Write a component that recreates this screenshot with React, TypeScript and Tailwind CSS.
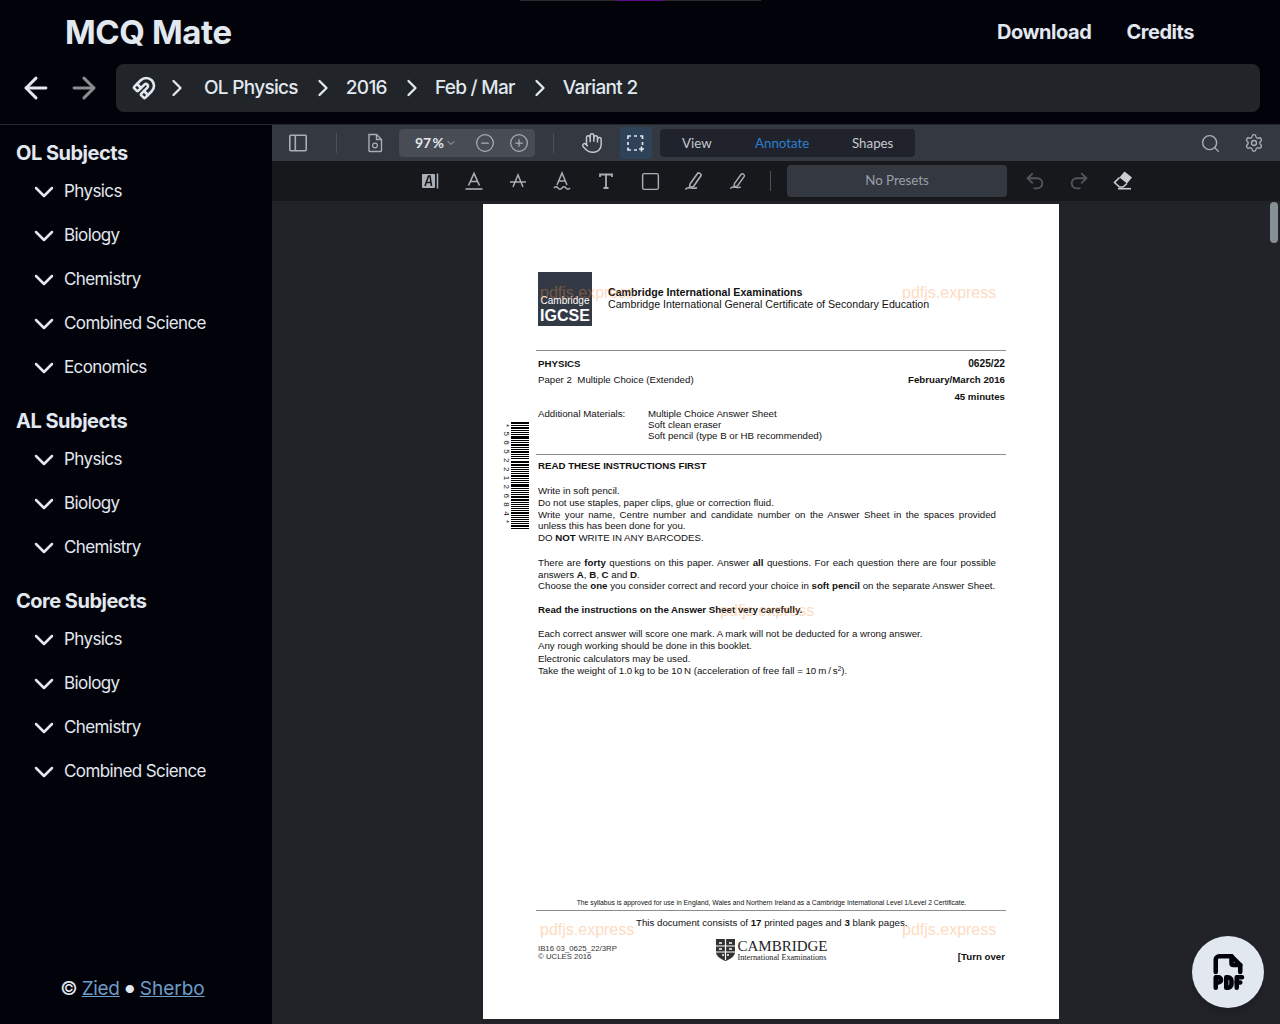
import {
  ArrowLeft,
  ArrowRight,
  ChevronDown,
  ChevronRight,
  CircleMinus,
  CirclePlus,
  Hand,
  Magnet,
  Redo2,
  Search,
  Settings,
  Square,
  Undo2,
} from "lucide-react";
import { TbFileTypePdf } from "react-icons/tb";

const groups = [
  { title: "OL Subjects", items: ["Physics", "Biology", "Chemistry", "Combined Science", "Economics"] },
  { title: "AL Subjects", items: ["Physics", "Biology", "Chemistry"] },
  { title: "Core Subjects", items: ["Physics", "Biology", "Chemistry", "Combined Science"] },
];

const crumbs = ["OL Physics", "2016", "Feb / Mar", "Variant 2"];

const barHeights = [2, 1, 2, 1, 1, 1, 3, 1, 1, 2, 1, 1, 2, 1, 1, 1, 2, 2, 1, 1, 1, 1, 2, 1, 1, 1, 3, 1, 1, 1, 1, 2, 2, 1, 1, 1, 1, 1, 2, 1, 1, 1, 1, 1, 2, 1];

export default function App() {
  return (
    <div className="relative flex h-screen w-full flex-col overflow-hidden bg-[#02030a] font-['Inter',sans-serif]">
      <div className="absolute left-[520px] top-0 h-px w-[241px] bg-[#2a2a2a]" />
      <div className="absolute left-[616px] top-0 h-px w-[48px] bg-[#5f0a87]" />
      <Header />
      <div className="flex min-h-0 flex-1">
        <Sidebar />
        <Viewer />
      </div>
      <button className="absolute left-[1192px] top-[936px] flex h-[72px] w-[72px] items-center justify-center rounded-full bg-[#e2e8f0] text-[#02030a] shadow-lg">
        <TbFileTypePdf size={42} strokeWidth={2.6} />
      </button>
    </div>
  );
}

const Header = () => {
  return (
    <header className="h-[125px] shrink-0 border-b border-[#23262d]">
      <div className="flex h-[64px] items-center justify-between pl-[65px] pr-[86px] text-[#e2e8f0]">
        <h1 className="pt-[2px] text-[33px] font-bold tracking-[-0.4px]">MCQ Mate</h1>
        <nav className="flex gap-[35px] text-[20px] font-bold tracking-[-0.45px]">
          <a>Download</a>
          <a>Credits</a>
        </nav>
      </div>
      <div className="flex items-center pl-[19px] pr-[20px]">
        <ArrowLeft size={34} strokeWidth={2.1} className="text-[#e2e8f0]" />
        <ArrowRight size={34} strokeWidth={2.1} className="ml-[14px] text-[#8a8d91]" />
        <div className="ml-[15px] flex h-[48px] flex-1 items-center rounded-lg bg-[#212429] pl-[16px] text-[19px] font-medium tracking-[-0.7px] text-[#e2e8f0]">
          <Magnet size={24} strokeWidth={2.6} />
          <ChevronRight size={28} strokeWidth={2} className="ml-[7px]" />
          <div className="ml-[4px] flex items-center">
            {crumbs.map((crumb, i) => (
              <div key={crumb} className="flex items-center">
                <span className="ml-[9px]">{crumb}</span>
                {i < crumbs.length - 1 && <ChevronRight size={28} strokeWidth={2} className="ml-[11px]" />}
              </div>
            ))}
          </div>
        </div>
      </div>
    </header>
  );
};

const Sidebar = () => {
  return (
    <aside className="flex w-[272px] shrink-0 flex-col pt-[12px] text-[#e2e8f0]">
      <div className="flex-1">
        {groups.map((group) => (
          <div key={group.title} className="mb-[16px]">
            <h2 className="flex h-[32px] items-center pl-[16px] text-[20px] font-bold tracking-[-0.5px]">
              {group.title}
            </h2>
            {group.items.map((item) => (
              <div key={item} className="flex h-[44px] items-center pl-[28px] pt-[2px] text-[17px] tracking-[-0.6px]">
                <ChevronDown size={32} strokeWidth={1.9} />
                <span className="ml-[4px]">{item}</span>
              </div>
            ))}
          </div>
        ))}
      </div>
      <footer className="flex h-[72px] items-center justify-center pr-[7px] pt-[2px] text-[19px]">
        <span>©</span>
        <a className="ml-[4px] tracking-[-0.3px] text-[#6d9cc6] underline">Zied</a>
        <span className="ml-[5px] text-[11px]">●</span>
        <a className="ml-[5px] text-[#6d9cc6] underline">Sherbo</a>
      </footer>
    </aside>
  );
};

const Viewer = () => {
  return (
    <main className="relative flex min-w-0 flex-1 flex-col bg-[#212329] font-['Lato',sans-serif]">
      <TopToolbar />
      <AnnotateToolbar />
      <div className="flex-1 overflow-hidden pl-[211px] pt-[3px]">
        <PdfPage />
      </div>
      <div className="absolute left-[998px] top-[77px] h-[41px] w-[8px] rounded-full bg-[#868e96]" />
    </main>
  );
};

const TopToolbar = () => {
  return (
    <div className="flex h-[36px] shrink-0 items-center bg-[#343841] text-[#a9afb7]">
      <div className="ml-[10px] flex w-[32px] justify-center">
        <svg width="20" height="20" viewBox="0 0 20 20" fill="none" stroke="currentColor" strokeWidth="1.6">
          <rect x="1.8" y="2.3" width="16.4" height="15.400" rx="1" />
          <path d="M7.300 2.300v15.400" />
        </svg>
      </div>
      <div className="ml-[22px] h-[20px] w-px bg-[#4b505a]" />
      <div className="ml-[21px] flex w-[32px] justify-center pl-[1px]">
        <svg width="20" height="20" viewBox="0 0 20 20" fill="none" stroke="currentColor" strokeWidth="1.4">
          <path d="M4 1.500h7.500L16.500 6.500v11a1 1 0 0 1-1 1h-10.500a1 1 0 0 1-1-1z" />
          <path d="M11.500 1.500v5h5" />
          <circle cx="10" cy="12.500" r="2.400" strokeWidth="1.200" />
        </svg>
      </div>
      <div className="ml-[9px] flex h-[28px] w-[136px] items-center rounded bg-[#474c55]">
        <span className="ml-[16px] w-[27px] whitespace-nowrap pb-[1px] text-[14px] font-bold tracking-[-0.2px] text-[#e2e6ea]">
          97&thinsp;%
        </span>
        <ChevronDown size={12} className="ml-[3px]" />
        <CircleMinus size={20} strokeWidth={1.5} className="ml-[18px]" />
        <CirclePlus size={20} strokeWidth={1.5} className="ml-[14px]" />
      </div>
      <div className="ml-[18px] h-[20px] w-px bg-[#4b505a]" />
      <div className="ml-[22px] flex w-[32px] justify-center text-[#c5cad0]">
        <Hand size={22} strokeWidth={1.6} />
      </div>
      <div className="ml-[12px] flex h-[32px] w-[32px] items-center justify-center rounded bg-[#2e4358] text-[#dfe6ee]">
        <svg width="20" height="20" viewBox="0 0 20 20" fill="none" stroke="currentColor" strokeWidth="1.7">
          <path d="M2 6V3h3M8 3h3M14 3h2.500v3M2 9v3M2 14.500V17h3M8 17h3M16.500 9v3M15.500 13.500v5M13 16h5" />
        </svg>
      </div>
      <div className="ml-[8px] flex h-[28px] w-[255px] items-center rounded bg-[#20232b] pt-[1px] text-[13.300px]">
        <span className="w-[95px] pl-[22px] text-[#c5cad0]">View</span>
        <span className="w-[97px] text-[#2b7fd0]">Annotate</span>
        <span className="text-[#c5cad0]">Shapes</span>
      </div>
      <Search size={21} strokeWidth={1.6} className="ml-[285px]" />
      <Settings size={20} strokeWidth={1.6} className="ml-[23px]" />
    </div>
  );
};

const AnnotateToolbar = () => {
  return (
    <div className="flex h-[40px] shrink-0 items-center bg-[#17181c] pl-[136px] text-[#a9afb7]">
      <ToolCell>
        <svg width="20" height="20" viewBox="0 0 20 20" fill="none">
          <rect x="2" y="3" width="13" height="14" rx="1" fill="currentColor" />
          <path d="M5 15 8.500 5h1.500l1.500 10M6.500 11.500H11" stroke="#17181c" strokeWidth="1.600" />
          <path d="M17.500 2.500v15" stroke="currentColor" strokeWidth="1.500" />
        </svg>
      </ToolCell>
      <ToolCell>
        <svg width="20" height="20" viewBox="0 0 20 20" fill="none" stroke="currentColor" strokeWidth="1.600">
          <path d="M4.500 14.500 10 2.500l5.500 12M6.500 10.500h7" />
          <path d="M1.500 18h17" />
        </svg>
      </ToolCell>
      <ToolCell>
        <svg width="20" height="20" viewBox="0 0 20 20" fill="none" stroke="currentColor" strokeWidth="1.500">
          <path d="M5 16 10 4l5 12" />
          <path d="M2 11h16" />
        </svg>
      </ToolCell>
      <ToolCell>
        <svg width="20" height="20" viewBox="0 0 20 20" fill="none" stroke="currentColor" strokeWidth="1.500">
          <path d="M5 14 10 2l5 12M6.700 10h6.600" />
          <path d="M2 17c1.500-1.600 2.700-1.600 4 0s2.700 1.600 4 0 2.700-1.600 4 0 2.700 1.600 4 0" />
        </svg>
      </ToolCell>
      <ToolCell>
        <svg width="20" height="20" viewBox="0 0 20 20" fill="none" stroke="currentColor" strokeWidth="1.800">
          <path d="M4 6V3.500h12V6M10 3.500V17M7.500 17h5" />
        </svg>
      </ToolCell>
      <ToolCell>
        <Square size={21} strokeWidth={1.6} />
      </ToolCell>
      <ToolCell>
        <Pen size={20} />
      </ToolCell>
      <ToolCell>
        <Pen size={18} />
      </ToolCell>
      <div className="ml-[10px] h-[20px] w-px bg-[#4b505a]" />
      <div className="ml-[16px] flex h-[32px] w-[220px] items-center justify-center rounded bg-[#343841] text-[13.300px] text-[#9aa0a8]">
        No Presets
      </div>
      <div className="ml-[6px] flex">
        <ToolCell>
          <Undo2 size={22} strokeWidth={2} className="text-[#50555d]" />
        </ToolCell>
        <ToolCell>
          <Redo2 size={22} strokeWidth={2} className="text-[#50555d]" />
        </ToolCell>
        <ToolCell>
          <svg width="20" height="20" viewBox="0 0 20 20" fill="none" className="text-[#c9ced4]">
            <path d="M11.500 1.500 19 7.500l-5 6L6.500 7.500z" fill="currentColor" />
            <path d="M6.500 7.500 1.500 12.500 6.500 17H10l4-3.500" stroke="currentColor" strokeWidth="1.600" />
            <path d="M5 18.700h13" stroke="currentColor" strokeWidth="1.600" />
          </svg>
        </ToolCell>
      </div>
    </div>
  );
};

const ToolCell = ({ children }: { children: React.ReactNode }) => {
  return <div className="flex w-[44px] justify-center">{children}</div>;
};

const Pen = ({ size }: { size: number }) => {
  return (
    <svg width={size} height={size} viewBox="0 0 20 20" fill="none" stroke="currentColor" strokeWidth="1.6">
      <path d="M6 13 13.500 2.500a1.500 1.500 0 0 1 2-.4l1 .7a1.500 1.500 0 0 1 .4 2L9.500 15.500 5.500 16.500z" />
      <path d="M1.500 18.500c1.500-2.500 3.500-2 6-1.500 2 .4 4 .5 5.500-.5" />
    </svg>
  );
};

const PdfPage = () => {
  return (
    <div className="relative h-[815px] w-[576px] bg-white pl-[55px] pr-[54px] pt-[68px] font-['Liberation_Sans',sans-serif] text-[9.700px] leading-[11.500px] text-[#111]">
      <Watermark className="left-[57px] top-[80px]" />
      <Watermark className="left-[419px] top-[80px]" />
      <Watermark className="left-[237px] top-[398px]" />
      <Watermark className="left-[57px] top-[717px]" />
      <Watermark className="left-[419px] top-[717px]" />
      <Barcode />

      <div className="flex h-[54px]">
        <div className="flex h-[54px] w-[54px] flex-col items-center justify-end bg-[#333a45] text-white">
          <span className="text-[10px] font-normal leading-[10px]">Cambridge</span>
          <span className="text-[16px] font-bold leading-[20px]">IGCSE</span>
        </div>
        <div className="ml-[16px] mt-[15px] text-[10.650px] leading-[11.500px]">
          <div className="font-bold">Cambridge International Examinations</div>
          <div>Cambridge International General Certificate of Secondary Education</div>
        </div>
      </div>

      <div className="ml-[-2px] mt-[24px] h-px w-[470px] bg-[#8c8c8c]" />

      <div className="mt-[7px] flex justify-between font-bold">
        <span>PHYSICS</span>
        <span className="text-[10.200px]">0625/22</span>
      </div>
      <div className="mt-[4.500px] flex justify-between">
        <span>Paper 2&nbsp; Multiple Choice (Extended)</span>
        <span className="font-bold">February/March 2016</span>
      </div>
      <div className="mt-[5.500px] text-right font-bold">45 minutes</div>

      <div className="mt-[5.500px] flex">
        <span className="w-[110px]">Additional Materials:</span>
        <div className="leading-[11px]">
          <div>Multiple Choice Answer Sheet</div>
          <div>Soft clean eraser</div>
          <div>Soft pencil (type B or HB recommended)</div>
        </div>
      </div>

      <div className="ml-[-2px] mt-[13px] h-px w-[470px] bg-[#8c8c8c]" />

      <div className="mt-[5px] font-bold">READ THESE INSTRUCTIONS FIRST</div>

      <div className="mt-[13.500px] pr-[9px] leading-[11.750px]">
        <div>Write in soft pencil.</div>
        <div>Do not use staples, paper clips, glue or correction fluid.</div>
        <Justified>Write your name, Centre number and candidate number on the Answer Sheet in the spaces provided</Justified>
        <div>unless this has been done for you.</div>
        <div>
          DO <b>NOT</b> WRITE IN ANY BARCODES.
        </div>
      </div>

      <div className="mt-[13.250px] pr-[9px]">
        <Justified>
          There are <b>forty</b> questions on this paper. Answer <b>all</b> questions. For each question there are four possible
        </Justified>
        <div>
          answers <b>A</b>, <b>B</b>, <b>C</b> and <b>D</b>.
        </div>
        <div>
          Choose the <b>one</b> you consider correct and record your choice in <b>soft pencil</b> on the separate Answer Sheet.
        </div>
      </div>

      <div className="mt-[12px] font-bold">Read the instructions on the Answer Sheet very carefully.</div>

      <div className="mt-[12.500px] leading-[12.600px]">
        <div>Each correct answer will score one mark. A mark will not be deducted for a wrong answer.</div>
        <div>Any rough working should be done in this booklet.</div>
        <div>Electronic calculators may be used.</div>
        <div>
          Take the weight of 1.0&thinsp;kg to be 10&thinsp;N (acceleration of free fall = 10&thinsp;m&thinsp;/&thinsp;s
          <sup className="text-[6.500px]">2</sup>).
        </div>
      </div>

      <div className="mt-[220.800px] text-center text-[6.800px] leading-[8px]">
        The syllabus is approved for use in England, Wales and Northern Ireland as a Cambridge International Level 1/Level 2 Certificate.
      </div>
      <div className="ml-[-2px] mt-[3.500px] h-px w-[470px] bg-[#8c8c8c]" />
      <div className="ml-[98px] mt-[5.500px]">
        This document consists of <b>17</b> printed pages and <b>3</b> blank pages.
      </div>

      <div className="mt-[10.500px] flex items-end">
        <div className="flex-1 text-[7.800px] leading-[8px] text-[#333]">
          <div>IB16 03_0625_22/3RP</div>
          <div>© UCLES 2016</div>
        </div>
        <div className="flex items-center">
          <Crest />
          <div className="ml-[3px] font-['Liberation_Serif',serif] text-[#222]">
            <div className="text-[15px] leading-[15px]">CAMBRIDGE</div>
            <div className="text-[8.200px] leading-[7px]">International Examinations</div>
          </div>
        </div>
        <span className="flex-1 text-right font-bold leading-[8px]">[Turn over</span>
      </div>
    </div>
  );
};

const Justified = ({ children }: { children: React.ReactNode }) => {
  return <div className="text-justify [text-align-last:justify]">{children}</div>;
};

const Watermark = ({ className }: { className: string }) => {
  return (
    <span className={`absolute text-[16px] leading-[18px] text-[#fb923c] opacity-[0.32] ${className}`}>pdfjs.express</span>
  );
};

const Barcode = () => {
  return (
    <div className="absolute left-[20px] top-[218px] flex h-[108px]">
      <div className="flex h-full w-[6px] items-center pt-[2px] text-[8px] leading-[6px] [writing-mode:vertical-rl]">
        <span className="tracking-[4.400px]">*5652212684*</span>
      </div>
      <div className="ml-[2px] flex h-full w-[18px] flex-col justify-between">
        {barHeights.map((h, i) => (
          <div key={i} className="bg-black" style={{ height: h }} />
        ))}
      </div>
    </div>
  );
};

const Crest = () => {
  return (
    <svg width="19" height="22" viewBox="0 0 19 22">
      <path d="M0 0h19v13c0 4-4 7-9.500 9C4 20 0 17 0 13z" fill="#333" />
      <path d="M9.500 0v21M0 7h19M0 13h19" stroke="#fff" strokeWidth="1.200" />
      <path d="M3 3h3v2H3zM13 3h3v2h-3zM3 9h3v2H3zM13 9h3v2h-3zM6 15h2v2H6zM11 15h2v2h-2z" fill="#ccc" />
    </svg>
  );
};
